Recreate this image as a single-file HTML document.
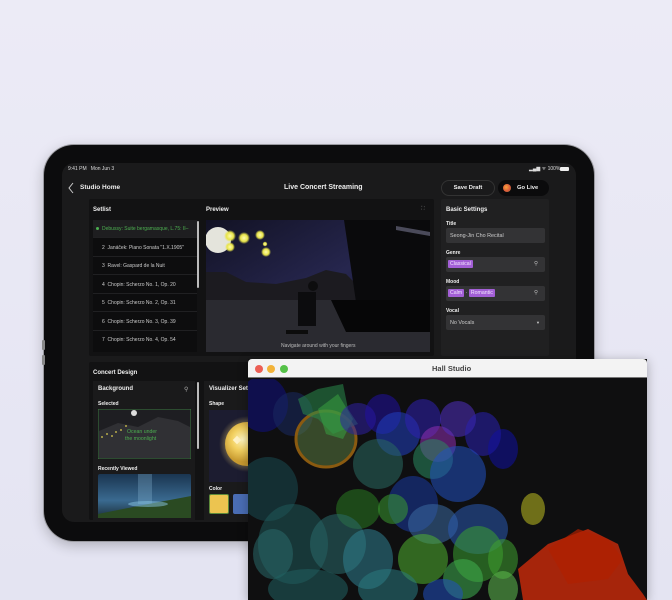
<!DOCTYPE html>
<html><head><meta charset="utf-8">
<style>
*{margin:0;padding:0;box-sizing:border-box}
body{width:672px;height:600px;overflow:hidden;background:linear-gradient(#ecebf6,#e4e4f2);font-family:"Liberation Sans",sans-serif;position:relative;color:#ddd}
.a{position:absolute}
.t{position:absolute;white-space:nowrap;font-size:5.4px;color:#ccc}
.b{font-weight:bold;color:#eee}
.ipad{left:44px;top:145px;width:550px;height:396px;border-radius:30px;background:#0c0c0d;box-shadow:0 0 0 1px #9a9aa0,0 4px 14px rgba(0,0,0,.25)}
.screen{left:62px;top:163px;width:514px;height:359px;border-radius:12px;background:#1a1a1b;overflow:hidden}
.inp{position:absolute;background:#333335;border-radius:2px}
.row{position:absolute;left:93px;width:104px;height:18px;border-bottom:1px solid #202022;font-size:5px;color:#ccc;padding:6px 0 0 9px;white-space:nowrap;overflow:hidden}
.tag{background:#a35fd6;color:#f2e6ff;padding:1px 2px;font-size:5.2px;border-radius:1px}
.bl ellipse,.bl path{fill-opacity:.55}
</style></head><body>
<div class="a ipad"></div>
<div class="a" style="left:42px;top:340px;width:3px;height:10px;background:#888;border-radius:1px"></div>
<div class="a" style="left:42px;top:355px;width:3px;height:10px;background:#888;border-radius:1px"></div>
<div class="a screen"></div>
<div class="t" style="left:68px;top:166px;color:#ddd;font-size:5px">9:41 PM&nbsp;&nbsp;&nbsp;Mon Jun 3</div>
<div class="t" style="left:529px;top:166px;color:#ddd;font-size:5px">▂▄▆ ᯤ 100%</div>
<div class="a" style="left:560px;top:167px;width:9px;height:4px;background:#eee;border-radius:1px"></div>
<svg class="a" style="left:67px;top:182px" width="8" height="12"><path d="M6 1L2 6l4 5" stroke="#ccc" stroke-width="1" fill="none"/></svg>
<div class="t b" style="left:80px;top:184px;font-size:6.5px">Studio Home</div>
<div class="t b" style="left:284px;top:184px;font-size:7px">Live Concert Streaming</div>
<div class="a" style="left:441px;top:180px;width:54px;height:16px;border:1px solid #333;border-radius:8px;font-size:5.8px;color:#eee;text-align:center;line-height:14px;font-weight:bold">Save Draft</div>
<div class="a" style="left:498px;top:180px;width:51px;height:16px;background:#0b0b0c;border-radius:8px;font-size:5.8px;color:#eee;line-height:16px;font-weight:bold;padding-left:19px">Go Live</div>
<div class="a" style="left:503px;top:184px;width:8px;height:8px;border-radius:50%;background:radial-gradient(circle at 40% 40%,#f7a13b,#d8563a 60%,#7a9e4a)"></div>
<div class="a" style="left:89px;top:199px;width:345px;height:157px;background:#121213;border-radius:2px"></div>
<div class="t b" style="left:93px;top:207px;font-size:6px">Setlist</div>
<div class="t b" style="left:206px;top:207px;font-size:6px">Preview</div>
<div class="t" style="left:421px;top:206px;color:#666">⛶</div>
<div class="a" style="left:93px;top:220px;width:104px;height:132px;background:#0d0d0e"></div>
<div class="row" style="top:220px;background:#1e1e20;color:#4caf50;padding-left:3px"><span style="display:inline-block;width:3px;height:3px;border-radius:50%;background:#4caf50;margin-right:3px"></span>Debussy: Suite bergamasque, L.75: II–</div>
<div class="row" style="top:239px">2&nbsp; Janáček: Piano Sonata "1.X.1905"</div>
<div class="row" style="top:257px">3&nbsp; Ravel: Gaspard de la Nuit</div>
<div class="row" style="top:276px">4&nbsp; Chopin: Scherzo No. 1, Op. 20</div>
<div class="row" style="top:294px">5&nbsp; Chopin: Scherzo No. 2, Op. 31</div>
<div class="row" style="top:313px">6&nbsp; Chopin: Scherzo No. 3, Op. 39</div>
<div class="row" style="top:331px;border:none">7&nbsp; Chopin: Scherzo No. 4, Op. 54</div>
<div class="a" style="left:197px;top:221px;width:2px;height:67px;background:#bbb;border-radius:1px"></div>
<svg class="a" style="left:206px;top:220px" width="224" height="132">
<defs><linearGradient id="sky" x1="0" y1="0" x2="1" y2="1"><stop offset="0" stop-color="#121224"/><stop offset=".5" stop-color="#26264e"/><stop offset="1" stop-color="#121226"/></linearGradient>
<radialGradient id="glow"><stop offset="0" stop-color="#fffbb0"/><stop offset=".6" stop-color="#e8e44a"/><stop offset="1" stop-color="#e8e44a" stop-opacity="0"/></radialGradient></defs>
<rect width="224" height="132" fill="url(#sky)"/>
<path d="M0 52L20 52 40 62 70 64 100 58 120 50 140 54 150 64 150 82 0 82z" fill="#1c1b20"/>
<rect y="80" width="224" height="52" fill="#2a2a30"/>
<circle cx="12" cy="20" r="13" fill="#e4e4dc"/>
<circle cx="24" cy="16" r="6" fill="url(#glow)"/><circle cx="24" cy="27" r="5" fill="url(#glow)"/>
<circle cx="38" cy="18" r="6" fill="url(#glow)"/><circle cx="54" cy="15" r="5" fill="url(#glow)"/>
<circle cx="60" cy="32" r="5" fill="url(#glow)"/><circle cx="59" cy="24" r="2.5" fill="url(#glow)"/>
<path d="M138 0H224V82H150z" fill="#0a0a0c"/>
<path d="M125 80H224V112H140z" fill="#060607"/>
<path d="M190 6L224 12V16L190 10z" fill="#4a4a5a"/>
<rect x="92" y="72" width="18" height="34" fill="#0c0c0e"/><circle cx="107" cy="66" r="5" fill="#0d0d0e"/>
<rect x="80" y="110" width="22" height="4" fill="#0c0c0c"/>
<text x="75" y="127" font-size="5" fill="#bbb" font-family="Liberation Sans">Navigate around with your fingers</text>
</svg>
<div class="a" style="left:441px;top:199px;width:108px;height:157px;background:#202021;border-radius:2px"></div>
<div class="t b" style="left:446px;top:207px;font-size:6px">Basic Settings</div>
<div class="t b" style="left:446px;top:221px;font-size:5px">Title</div>
<div class="inp" style="left:446px;top:228px;width:99px;height:15px"><span class="t" style="left:4px;top:4.5px">Seong-Jin Cho Recital</span></div>
<div class="t b" style="left:446px;top:250px;font-size:5px">Genre</div>
<div class="inp" style="left:446px;top:257px;width:99px;height:15px"><span class="t" style="left:2px;top:4px"><span class="tag">Classical</span></span><span class="t" style="left:88px;top:4px;color:#bbb">⚲</span></div>
<div class="t b" style="left:446px;top:279px;font-size:5px">Mood</div>
<div class="inp" style="left:446px;top:286px;width:99px;height:15px"><span class="t" style="left:2px;top:4px"><span class="tag">Calm</span> · <span class="tag">Romantic</span></span><span class="t" style="left:88px;top:4px;color:#bbb">⚲</span></div>
<div class="t b" style="left:446px;top:308px;font-size:5px">Vocal</div>
<div class="inp" style="left:446px;top:315px;width:99px;height:15px"><span class="t" style="left:4px;top:4.5px">No Vocals</span><span class="t" style="left:90px;top:5px;font-size:4px">▼</span></div>
<div class="a" style="left:89px;top:362px;width:470px;height:158px;background:#121213;border-radius:2px"></div>
<div class="t b" style="left:93px;top:370px;font-size:6px">Concert Design</div>
<div class="a" style="left:93px;top:381px;width:102px;height:139px;background:#1a1a1b"></div>
<div class="t b" style="left:98px;top:386px;font-size:6px">Background</div>
<div class="t" style="left:184px;top:386px;font-size:6px;color:#aaa">⚲</div>
<div class="t b" style="left:98px;top:401px;font-size:5px">Selected</div>
<svg class="a" style="left:98px;top:409px" width="93" height="50"><rect width="93" height="50" fill="#1e1e22" stroke="#3b7a3e"/><path d="M1 22L20 14 40 18 60 8 80 12 92 18V49H1z" fill="#303034"/><circle cx="36" cy="4" r="3" fill="#ddd"/><g fill="#e0d050"><circle cx="4" cy="28" r=".9"/><circle cx="9" cy="25" r=".9"/><circle cx="14" cy="27" r=".9"/><circle cx="18" cy="23" r=".9"/><circle cx="23" cy="21" r=".9"/><circle cx="28" cy="17" r=".9"/></g><text x="29" y="24" font-size="5.2" fill="#4caf50" font-family="Liberation Sans">Ocean under</text><text x="27" y="31" font-size="5.2" fill="#4caf50" font-family="Liberation Sans">the moonlight</text></svg>
<div class="t b" style="left:98px;top:466px;font-size:5px">Recently Viewed</div>
<svg class="a" style="left:98px;top:474px" width="93" height="44"><defs><linearGradient id="f" x1="0" y1="0" x2="0" y2="1"><stop offset="0" stop-color="#1a3550"/><stop offset=".6" stop-color="#3a6a90"/><stop offset="1" stop-color="#1c2e3a"/></linearGradient></defs><rect width="93" height="44" rx="2" fill="url(#f)"/><rect x="40" y="0" width="14" height="30" fill="#8ab8d8" opacity=".3"/><path d="M0 40L40 32 93 22V44H0z" fill="#2a4a22"/><ellipse cx="50" cy="30" rx="20" ry="3" fill="#8ac8e8" opacity=".5"/></svg>
<div class="a" style="left:197px;top:382px;width:2px;height:67px;background:#bbb;border-radius:1px"></div>
<div class="a" style="left:204px;top:381px;width:60px;height:139px;background:#1a1a1b"></div>
<div class="t b" style="left:209px;top:386px;font-size:6px">Visualizer Settings</div>
<div class="t b" style="left:209px;top:401px;font-size:5px">Shape</div>
<svg class="a" style="left:209px;top:410px" width="45" height="72"><defs><radialGradient id="s" cx=".4" cy=".4"><stop offset="0" stop-color="#fff6c0"/><stop offset=".5" stop-color="#f2d060"/><stop offset="1" stop-color="#c89a30"/></radialGradient><radialGradient id="h"><stop offset=".55" stop-color="#f0d070" stop-opacity=".6"/><stop offset="1" stop-color="#f0d070" stop-opacity="0"/></radialGradient></defs><rect width="45" height="72" fill="#1c1c30"/><circle cx="38" cy="34" r="28" fill="url(#h)"/><circle cx="38" cy="34" r="22" fill="url(#s)"/><rect x="25" y="27" width="6" height="6" transform="rotate(45 28 30)" fill="#fff3c8"/></svg>
<div class="t b" style="left:209px;top:486px;font-size:5px">Color</div>
<div class="a" style="left:209px;top:494px;width:20px;height:20px;background:#ecc450;border:1px solid #5d8a3a;border-radius:2px"></div>
<div class="a" style="left:233px;top:494px;width:20px;height:20px;background:#4a6db4;border-radius:2px"></div>
<div class="a" style="left:248px;top:359px;width:399px;height:241px;background:#0f0f10;box-shadow:0 2px 10px rgba(0,0,0,.3)"></div>
<div class="a" style="left:248px;top:359px;width:399px;height:19px;background:#f3f3f3;border-bottom:1px solid #777;border-radius:4px 4px 0 0"></div>
<div class="a" style="left:255px;top:365px;width:8px;height:8px;border-radius:50%;background:#ec5f55"></div>
<div class="a" style="left:267px;top:365px;width:8px;height:8px;border-radius:50%;background:#f2b33a"></div>
<div class="a" style="left:280px;top:365px;width:8px;height:8px;border-radius:50%;background:#55c148"></div>
<div class="t" style="left:432px;top:364px;font-size:7.5px;color:#444;font-weight:bold">Hall Studio</div>
<svg class="a bl" style="left:248px;top:379px" width="399" height="221">
<ellipse cx="15" cy="25" rx="25" ry="28" fill="#101080"/>
<ellipse cx="45" cy="35" rx="20" ry="22" fill="#1a2a60"/>
<ellipse cx="78" cy="60" rx="30" ry="28" fill="#5a7a40" stroke="#8a5a10" stroke-width="3"/>
<path d="M50 20L70 10 95 5 100 30 110 45 85 55 70 40 55 35z" fill="#2a8a4a"/>
<path d="M70 30L90 15 105 40 95 60 78 55z" fill="#38a040"/>
<ellipse cx="110" cy="40" rx="18" ry="16" fill="#3020a0"/>
<ellipse cx="135" cy="35" rx="18" ry="20" fill="#2010a0"/>
<ellipse cx="150" cy="55" rx="22" ry="22" fill="#2040c0"/>
<ellipse cx="130" cy="85" rx="25" ry="25" fill="#2a6a60"/>
<ellipse cx="175" cy="40" rx="18" ry="20" fill="#3020b0"/>
<ellipse cx="190" cy="65" rx="18" ry="18" fill="#9030b0"/>
<ellipse cx="185" cy="80" rx="20" ry="20" fill="#2a8a60"/>
<ellipse cx="210" cy="40" rx="18" ry="18" fill="#5030c0"/>
<ellipse cx="235" cy="55" rx="18" ry="22" fill="#2a20b0"/>
<ellipse cx="255" cy="70" rx="15" ry="20" fill="#1010a0"/>
<ellipse cx="210" cy="95" rx="28" ry="28" fill="#2050c0"/>
<ellipse cx="165" cy="125" rx="25" ry="28" fill="#1a3aa0"/>
<ellipse cx="110" cy="130" rx="22" ry="20" fill="#2a7a20"/>
<ellipse cx="145" cy="130" rx="15" ry="15" fill="#3a9a30"/>
<ellipse cx="20" cy="110" rx="30" ry="32" fill="#1a4a50"/>
<ellipse cx="45" cy="165" rx="35" ry="40" fill="#1f5a5a"/>
<ellipse cx="25" cy="175" rx="20" ry="25" fill="#2a6a6a"/>
<ellipse cx="90" cy="165" rx="28" ry="30" fill="#2a6a6a"/>
<ellipse cx="120" cy="180" rx="25" ry="30" fill="#308090"/>
<ellipse cx="185" cy="145" rx="25" ry="20" fill="#3a6aa0"/>
<ellipse cx="230" cy="150" rx="30" ry="25" fill="#2a5ab0"/>
<ellipse cx="175" cy="180" rx="25" ry="25" fill="#50b030"/>
<ellipse cx="230" cy="175" rx="25" ry="28" fill="#3aa030"/>
<ellipse cx="255" cy="180" rx="15" ry="20" fill="#40a030"/>
<ellipse cx="215" cy="200" rx="20" ry="20" fill="#40b050"/>
<ellipse cx="255" cy="210" rx="15" ry="18" fill="#60c050"/>
<ellipse cx="285" cy="130" rx="12" ry="16" fill="#c0c020"/>
<ellipse cx="140" cy="210" rx="30" ry="20" fill="#2a7a80"/>
<ellipse cx="195" cy="215" rx="20" ry="15" fill="#2050c0"/>
<ellipse cx="60" cy="210" rx="40" ry="20" fill="#206060"/>
<path d="M270 190L300 165 340 150 370 165 380 195 395 215 399 221H275z" fill="#cc2a0a" style="fill-opacity:.8"/>
<path d="M300 170L330 150 360 160 375 180 360 200 320 205z" fill="#b02000" style="fill-opacity:.7"/>
</svg>
</body></html>
